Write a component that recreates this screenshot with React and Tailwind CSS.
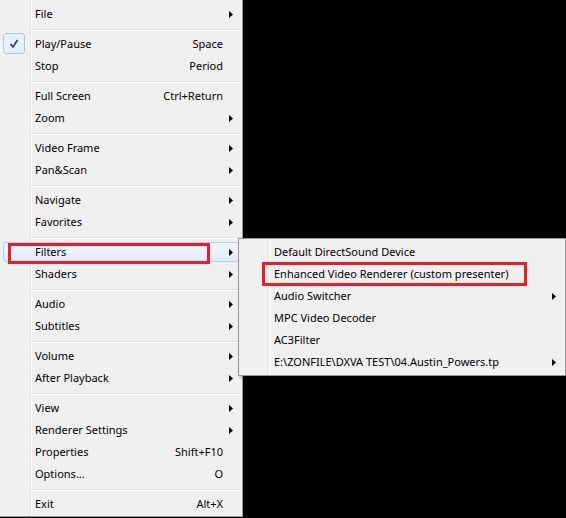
import React from 'react';

const mainItems = [
  { label: 'File', sub: true },
  'sep',
  { label: 'Play/Pause', key: 'Space', checked: true },
  { label: 'Stop', key: 'Period' },
  'sep',
  { label: 'Full Screen', key: 'Ctrl+Return' },
  { label: 'Zoom', sub: true },
  'sep',
  { label: 'Video Frame', sub: true },
  { label: 'Pan&Scan', sub: true },
  'sep',
  { label: 'Navigate', sub: true },
  { label: 'Favorites', sub: true },
  'sep',
  { label: 'Filters', sub: true, active: true },
  { label: 'Shaders', sub: true },
  'sep',
  { label: 'Audio', sub: true },
  { label: 'Subtitles', sub: true },
  'sep',
  { label: 'Volume', sub: true },
  { label: 'After Playback', sub: true },
  'sep',
  { label: 'View', sub: true },
  { label: 'Renderer Settings', sub: true },
  { label: 'Properties', key: 'Shift+F10' },
  { label: 'Options...', key: 'O' },
  'sep',
  { label: 'Exit', key: 'Alt+X' },
];

const filterItems = [
  { label: 'Default DirectSound Device' },
  { label: 'Enhanced Video Renderer (custom presenter)' },
  { label: 'Audio Switcher', sub: true },
  { label: 'MPC Video Decoder' },
  { label: 'AC3Filter' },
  { label: 'E:\\ZONFILE\\DXVA TEST\\04.Austin_Powers.tp', sub: true },
];

const Arrow = () => (
  <svg width="4" height="7" viewBox="0 0 4 7" className="block">
    <path d="M0 0 L4 3.5 L0 7 Z" fill="#000" />
  </svg>
);

const Separator = () => (
  <div className="h-[8px] pt-[4px] pl-[30px] pr-[2px]">
    <div className="h-[2px] border-t border-[#e0e0e0] bg-white" />
  </div>
);

const Row = ({ item, arrowPad }) => (
  <div className="relative flex h-[22px] items-center pb-[2px] pl-[35px]">
    {item.active && (
      <div className="absolute left-[3px] right-[3px] top-[1px] bottom-[1px] rounded-[3px] border border-[#aecff7] bg-[linear-gradient(to_bottom,#f2f7fd,#e1ecfa)]" />
    )}
    {item.checked && (
      <div className="absolute left-[3px] top-0 flex h-[21px] w-[22px] items-center justify-center rounded-[3px] border border-[#a9c9ef] bg-[#e7effb]">
        <svg width="10" height="10" viewBox="0 0 10 10">
          <path d="M1.5 5 L4 8 L8.5 1" fill="none" stroke="#1e2f8c" strokeWidth="1.6" />
        </svg>
      </div>
    )}
    <span className="relative flex-1 whitespace-nowrap">{item.label}</span>
    {item.key && <span className="relative whitespace-nowrap">{item.key}</span>}
    <div className={`relative flex items-center pt-[2px] ${arrowPad}`}>
      {item.sub ? <Arrow /> : <div className="w-[4px]" />}
    </div>
  </div>
);

export default function App() {
  return (
    <div
      className="relative h-[518px] w-[566px] overflow-hidden bg-black text-[11px] leading-none text-black"
      style={{ fontFamily: '"Noto Sans", "Open Sans", sans-serif' }}
    >
      {/* main context menu */}
      <div className="h-[517px] w-[243px] border-r border-b border-[#979797] bg-[linear-gradient(to_right,#f0f0f0_30px,#e2e3e3_30px,#e2e3e3_31px,#ffffff_31px,#ffffff_32px,#f0f0f0_32px)] pt-[3px]">
        {mainItems.map((item, i) =>
          item === 'sep' ? (
            <Separator key={i} />
          ) : (
            <Row key={i} item={item} arrowPad="pl-[6px] pr-[9px] w-[19px]" />
          )
        )}
      </div>

      {/* Filters submenu */}
      <div className="absolute left-[238px] top-[238px] h-[138px] w-[328px] border border-[#979797] bg-[linear-gradient(to_right,#f0f0f0_29px,#e2e3e3_29px,#e2e3e3_30px,#ffffff_30px,#ffffff_31px,#f0f0f0_31px)] pt-[2px] shadow-[2px_2px_3px_rgba(0,0,0,0.3)]">
        {filterItems.map((item, i) => (
          <Row key={i} item={item} arrowPad="pl-[6px] pr-[9px]" />
        ))}
      </div>

      {/* red annotation boxes */}
      <div className="absolute left-[8px] top-[243px] h-[21px] w-[202px] border-[3px] border-[#ee1c24]" />
      <div className="absolute left-[262px] top-[262px] h-[24px] w-[265px] border-[3px] border-[#ee1c24]" />
    </div>
  );
}
